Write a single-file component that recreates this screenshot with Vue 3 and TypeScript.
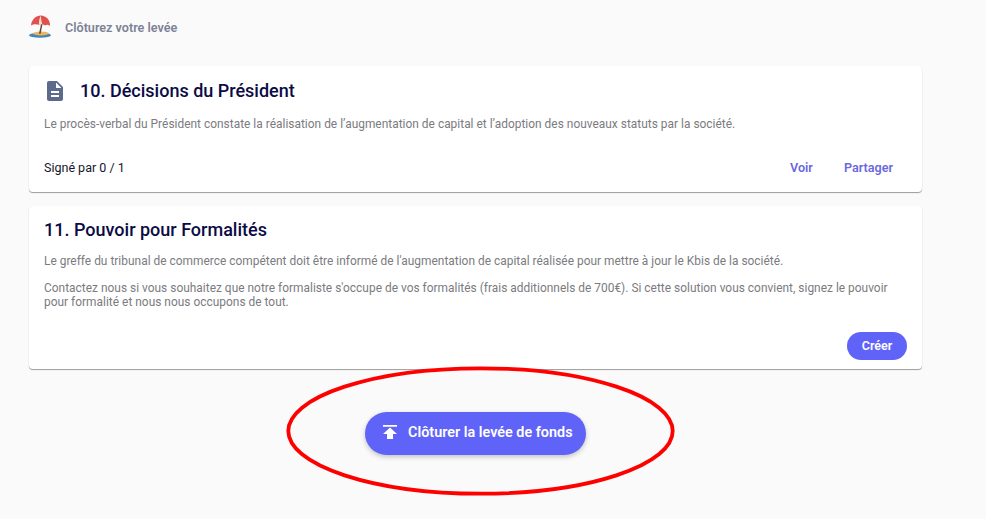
<script setup lang="ts">
const heading = 'Clôturez votre levée'
</script>

<template>
  <div class="page">
    <header class="top">
      <svg class="beach" width="26" height="24" viewBox="0 0 26 24" aria-hidden="true">
        <ellipse cx="11" cy="20.300" rx="11" ry="2.400" fill="#3f86bd" />
        <ellipse cx="12" cy="18.500" rx="8" ry="1.900" fill="#eeb35e" />
        <path d="M12.300 8 L10 18.800 L11.600 18.800 L13.700 8 Z" fill="#5b4636" />
        <path d="M2 10.500 C2.500 4.500 7 0.500 12 0.500 C17 0.800 21.500 5 21 11 C19.500 9.600 17.600 9.400 16 10.400 C14.400 9 12 8.800 10 9.700 C7.500 8.800 4 9 2 10.500 Z" fill="#e2504a" />
        <path d="M10 9.700 C9.800 6 10.300 3 12 0.500 C11.800 3.500 12.500 6.500 13.300 9.300 C12.200 9.100 11 9.300 10 9.700 Z" fill="#f5ded6" />
      </svg>
      <span class="heading">{{ heading }}</span>
    </header>

    <section class="card first">
      <div class="title-row">
        <svg class="doc" width="24" height="24" viewBox="0 0 24 24" aria-hidden="true">
          <path d="M14 2H6c-1.100 0-2 .9-2 2v16c0 1.100.9 2 2 2h12c1.100 0 2-.9 2-2V8l-6-6zm2 16H8v-2h8v2zm0-4H8v-2h8v2zm-3-5V3.500L18.500 9H13z" fill="#5c6a8c" />
        </svg>
        <h2>10. Décisions du Président</h2>
      </div>
      <p class="desc one">Le procès-verbal du Président constate la réalisation de l’augmentation de capital et l’adoption des nouveaux statuts par la société.</p>
      <div class="foot">
        <span class="signed">Signé par 0 / 1</span>
        <div class="links">
          <a>Voir</a>
          <a>Partager</a>
        </div>
      </div>
    </section>

    <section class="card second">
      <h2>11. Pouvoir pour Formalités</h2>
      <p class="desc two">Le greffe du tribunal de commerce compétent doit être informé de l'augmentation de capital réalisée pour mettre à jour le Kbis de la société.</p>
      <p class="desc three">Contactez nous si vous souhaitez que notre formaliste s'occupe de vos formalités (frais additionnels de 700€). Si cette solution vous convient, signez le pouvoir pour formalité et nous nous occupons de tout.</p>
      <div class="actions">
        <button class="small" type="button">Créer</button>
      </div>
    </section>

    <div class="close-row">
      <button class="close" type="button">
        <svg width="24" height="24" viewBox="0 0 24 24" aria-hidden="true">
          <path d="M5 5v1.800h14V5H5zm0 9h4v5h6v-5h4l-7-6.500-7 6.500z" fill="#fff" />
        </svg>
        <span>Clôturer la levée de fonds</span>
      </button>
    </div>

    <svg class="circle" width="986" height="519" viewBox="0 0 986 519" aria-hidden="true">
      <ellipse cx="480.500" cy="431" rx="192.200" ry="62.700" fill="none" stroke="#ff0000" stroke-width="3.800" />
    </svg>
  </div>
</template>

<style scoped>
.page {
  position: relative;
  box-sizing: border-box;
  width: 986px;
  height: 519px;
  padding: 14px 64px 0 29px;
  background: #fafafa;
  font-family: Roboto, "Liberation Sans", sans-serif;
  overflow: hidden;
}
.top {
  display: flex;
  align-items: center;
  gap: 10px;
  height: 26px;
}
.beach {
  flex: none;
  margin-top: -1px;
}
.heading {
  font-size: 12.600px;
  font-weight: 600;
  color: #7c8296;
}
.card {
  background: #fff;
  border-radius: 4px;
  box-shadow: 0 1px 1px rgba(0, 0, 0, 0.38), 0 0 1px rgba(0, 0, 0, 0.04);
  box-sizing: border-box;
}
.first {
  height: 126px;
  margin-top: 26px;
  padding: 12px 15px 0;
}
.second {
  height: 163px;
  margin-top: 14px;
  padding: 12px 15px 0;
}
.title-row {
  display: flex;
  align-items: center;
  gap: 13px;
  height: 25px;
}
.doc {
  flex: none;
  margin-left: -1px;
}
h2 {
  margin: 0;
  font-size: 18px;
  line-height: 24px;
  font-weight: 500;
  color: #0b0b45;
}
.desc {
  margin: 0;
  font-size: 11.900px;
  letter-spacing: 0.02px;
  line-height: 14px;
  color: #7b7b80;
}
.one {
  margin-top: 14px;
}
.two {
  margin-top: 12px;
}
.three {
  margin-top: 13px;
}
.foot {
  display: flex;
  align-items: center;
  justify-content: space-between;
  margin-top: 26px;
  height: 20px;
}
.signed {
  font-size: 12.500px;
  color: #16162a;
}
.links {
  display: flex;
  gap: 31px;
  padding-right: 14px;
}
.links a {
  font-size: 12.600px;
  font-weight: 600;
  color: #6b68e0;
}
.actions {
  display: flex;
  justify-content: flex-end;
  margin-top: 23px;
}
.small {
  width: 60px;
  height: 28px;
  border: 0;
  border-radius: 14px;
  background: #6063f8;
  color: #fff;
  font-family: inherit;
  font-size: 12.500px;
  font-weight: 600;
  padding: 0 0 2px;
}
.close-row {
  display: flex;
  justify-content: center;
  margin-top: 43px;
}
.close {
  display: flex;
  align-items: center;
  gap: 6px;
  box-sizing: border-box;
  width: 221px;
  height: 43px;
  padding: 0 0 3px 13px;
  border: 0;
  border-radius: 22px;
  background: #6063f8;
  color: #fff;
  font-family: inherit;
  font-size: 14.400px;
  font-weight: 600;
  box-shadow: 0 2px 5px rgba(0, 0, 0, 0.22);
}
.circle {
  position: absolute;
  left: 0;
  top: 0;
  pointer-events: none;
}
</style>
